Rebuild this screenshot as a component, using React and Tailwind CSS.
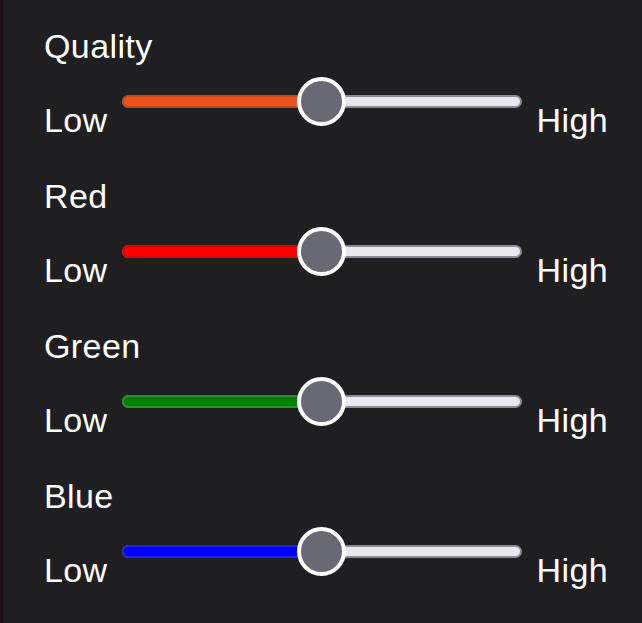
import React from "react";

const sliders = [
  { label: "Quality", fill: "bg-[#e9541f]", border: "border-[#c7451a]" },
  { label: "Red", fill: "bg-[#ff0000]", border: "border-[#e00000]" },
  { label: "Green", fill: "bg-[#008000]", border: "border-[#2a8f2a]" },
  { label: "Blue", fill: "bg-[#0000ff]", border: "border-[#2222e6]" },
];

function Slider({ fill, border }) {
  return (
    <div className="relative h-[48px] w-[400px]">
      <div className="absolute left-0 right-0 top-[17.5px] h-[13px] rounded-full border-[2px] border-[#8c8b96] bg-[#e9e8ee]" />
      <div className={`absolute left-0 top-[17.5px] h-[13px] w-[200px] rounded-l-full border-[2px] border-r-0 ${border} ${fill}`} />
      <div className="absolute left-[175.5px] top-[-0.5px] h-[49px] w-[49px] rounded-full border-[4px] border-white bg-[#696975]" />
    </div>
  );
}

export default function App() {
  return (
    <div className="flex h-[623px] w-[642px] bg-[#1f1f21] text-white" style={{ fontFamily: '"Liberation Sans", Arial, sans-serif' }}>
      <div className="h-full w-[3px] bg-[#1c1018]" />
      <div className="flex flex-col gap-[39px] pl-[41px] pt-[27.5px] text-[34px] leading-[37px] tracking-[0.4px]">
        {sliders.map((s) => (
          <div key={s.label} className="flex flex-col">
            <div className="h-[37px]">{s.label}</div>
            <div className="grid h-[74px] grid-cols-[77.5px_400px_auto] items-start">
              <span className="mt-[37px]">Low</span>
              <div className="mt-[13px]">
                <Slider fill={s.fill} border={s.border} />
              </div>
              <span className="ml-[15px] mt-[37px]">High</span>
            </div>
          </div>
        ))}
      </div>
    </div>
  );
}
